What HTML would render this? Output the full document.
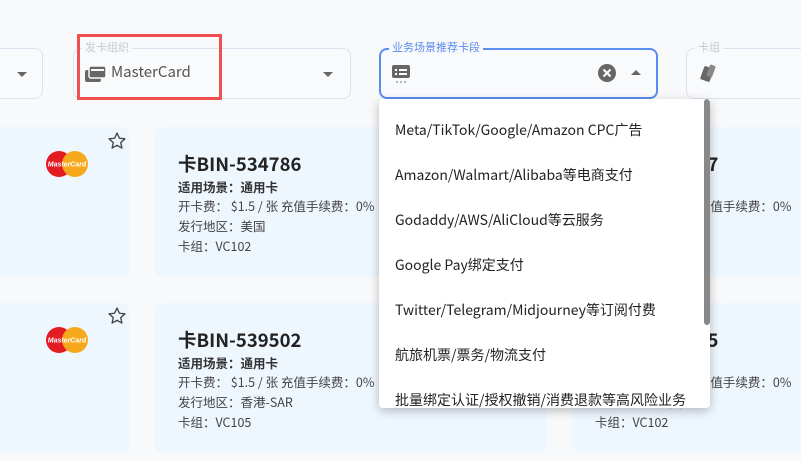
<!DOCTYPE html>
<html><head><meta charset="utf-8"><style>
*{box-sizing:border-box;margin:0;padding:0}
body{width:801px;height:461px;overflow:hidden;background:#f8f9fb;font-family:"Noto Sans CJK SC","Liberation Sans",sans-serif;position:relative;color:#333}
.f{position:absolute;top:48px;height:51px;border:1px solid #dde3ee;border-radius:8px;background:#f9fafc}
.lbl{position:absolute;top:-9px;left:8px;font-size:11px;color:#c5cad3;background:#f8f9fb;padding:0 3px;line-height:14px}
.caret{position:absolute;top:23px;width:0;height:0;border-left:5px solid transparent;border-right:5px solid transparent;border-top:5px solid #666}
.card{position:absolute;background:#eef6fe;border-radius:8px;height:150px}
.t{position:absolute;left:23px;top:24px;font-size:18.5px;font-weight:bold;color:#222;line-height:26px}
.l{position:absolute;left:23px;font-size:12.5px;color:#444;line-height:17px;white-space:nowrap}
.dd{position:absolute;left:379px;top:99px;width:331px;height:309px;background:#fff;border-radius:4px;box-shadow:0 3px 10px rgba(0,0,0,.25);overflow:hidden}
.dd div.i{position:absolute;left:16px;font-size:14px;color:#222;white-space:nowrap;line-height:20px}
.mc{position:absolute;width:44px;height:28px}
</style></head><body>
<div class="f" style="left:-20px;width:63px"><div class="caret" style="left:36px"></div></div>
<div class="f" style="left:73px;width:278px"><div class="lbl">发卡组织</div>
<svg style="position:absolute;left:11px;top:16px" width="22" height="18" viewBox="0 0 22 18"><rect x="0" y="5" width="16" height="12" rx="2" fill="#666"/><rect x="4" y="1" width="17" height="12" rx="2" fill="#666" stroke="#f9fafc" stroke-width="1.5"/><rect x="6" y="4" width="13" height="2" fill="#f9fafc"/></svg>
<div style="position:absolute;left:37px;top:12px;font-size:15px;color:#555;line-height:22px">MasterCard</div>
<div class="caret" style="left:249px"></div></div>
<div style="position:absolute;left:77px;top:34px;width:145px;height:66px;border:3px solid #f05050"></div>
<div class="f" style="left:379px;width:279px;border:2px solid #5b8df0"><div class="lbl" style="color:#5b8df0;top:-10px">业务场景推荐卡段</div>
<svg style="position:absolute;left:11px;top:15px" width="18" height="20"><rect x="0" y="0" width="18" height="13" rx="2" fill="#666"/><rect x="3" y="4" width="2" height="2" fill="#fff"/><rect x="7" y="4" width="8" height="2" fill="#fff"/><rect x="3" y="8" width="2" height="2" fill="#fff"/><rect x="7" y="8" width="8" height="2" fill="#fff"/><circle cx="5" cy="17" r=".8" fill="#666"/><circle cx="9" cy="17" r=".8" fill="#666"/><circle cx="13" cy="17" r=".8" fill="#666"/></svg>
<svg style="position:absolute;left:216px;top:13px" width="20" height="20"><circle cx="10" cy="10" r="9" fill="#666"/><path d="M6.5 6.5l7 7M13.5 6.5l-7 7" stroke="#fff" stroke-width="2"/></svg>
<div style="position:absolute;left:250px;top:20px;border-left:5px solid transparent;border-right:5px solid transparent;border-bottom:5px solid #666"></div></div>
<div class="f" style="left:686px;width:130px"><div class="lbl">卡组</div>
<svg style="position:absolute;left:12px;top:14px" width="20" height="20"><rect x="3" y="4" width="10" height="14" rx="1.5" fill="#666" transform="rotate(20 8 11)"/><rect x="9" y="2" width="6" height="12" rx="1" fill="#888" transform="rotate(20 12 8)"/></svg></div>

<div class="card" style="left:-10px;top:127px;width:139px"></div>
<div class="card" style="left:-10px;top:303px;width:139px"></div>
<svg class="mc" style="left:45px;top:150px" viewBox="0 0 44 28"><circle cx="14" cy="14" r="13" fill="#e31b23"/><circle cx="30" cy="14" r="13" fill="#f8a81c"/><text x="22" y="16.5" font-size="7" font-style="italic" font-weight="bold" fill="#fff" text-anchor="middle" font-family="Liberation Sans">MasterCard</text></svg>
<svg class="mc" style="left:45px;top:326px" viewBox="0 0 44 28"><circle cx="14" cy="14" r="13" fill="#e31b23"/><circle cx="30" cy="14" r="13" fill="#f8a81c"/><text x="22" y="16.5" font-size="7" font-style="italic" font-weight="bold" fill="#fff" text-anchor="middle" font-family="Liberation Sans">MasterCard</text></svg>
<svg style="position:absolute;left:107px;top:131px" width="20" height="20" viewBox="0 0 24 24"><path d="M12 2.5l2.9 6.2 6.6.7-5 4.5 1.4 6.6L12 17.2l-5.9 3.3 1.4-6.6-5-4.5 6.6-.7z" fill="none" stroke="#444" stroke-width="1.6" stroke-linejoin="round"/></svg>
<svg style="position:absolute;left:107px;top:306px" width="20" height="20" viewBox="0 0 24 24"><path d="M12 2.5l2.9 6.2 6.6.7-5 4.5 1.4 6.6L12 17.2l-5.9 3.3 1.4-6.6-5-4.5 6.6-.7z" fill="none" stroke="#444" stroke-width="1.6" stroke-linejoin="round"/></svg>

<div class="card" style="left:155px;top:127px;width:392px"><div class="t">卡BIN-534786</div><div class="l" style="top:51px;font-weight:bold;color:#333">适用场景：通用卡</div><div class="l" style="top:70px">开卡费： $1.5 / 张 充值手续费：0%</div><div class="l" style="top:90px">发行地区：美国</div><div class="l" style="top:110px">卡组：VC102</div></div>
<div class="card" style="left:155px;top:303px;width:392px"><div class="t">卡BIN-539502</div><div class="l" style="top:51px;font-weight:bold;color:#333">适用场景：通用卡</div><div class="l" style="top:70px">开卡费： $1.5 / 张 充值手续费：0%</div><div class="l" style="top:90px">发行地区：香港-SAR</div><div class="l" style="top:110px">卡组：VC105</div></div>
<div class="card" style="left:572px;top:127px;width:260px"><div class="t">卡BIN-534787</div><div class="l" style="top:51px;font-weight:bold">适用场景：通用卡</div><div class="l" style="top:70px">开卡费： $1.5 / 张 充值手续费：0%</div><div class="l" style="top:90px">发行地区：美国</div><div class="l" style="top:110px">卡组：VC102</div></div>
<div class="card" style="left:572px;top:303px;width:260px"><div class="t">卡BIN-539505</div><div class="l" style="top:51px;font-weight:bold">适用场景：通用卡</div><div class="l" style="top:70px">开卡费： $1.5 / 张 充值手续费：0%</div><div class="l" style="top:90px">发行地区：美国</div><div class="l" style="top:110px">卡组：VC102</div></div>

<div class="dd">
<div class="i" style="top:21px">Meta/TikTok/Google/Amazon CPC广告</div>
<div class="i" style="top:66px">Amazon/Walmart/Alibaba等电商支付</div>
<div class="i" style="top:111px">Godaddy/AWS/AliCloud等云服务</div>
<div class="i" style="top:156px">Google Pay绑定支付</div>
<div class="i" style="top:201px">Twitter/Telegram/Midjourney等订阅付费</div>
<div class="i" style="top:246px">航旅机票/票务/物流支付</div>
<div class="i" style="top:291px">批量绑定认证/授权撤销/消费退款等高风险业务</div>
<div style="position:absolute;right:0;top:0;width:6px;height:226px;background:#888;border-radius:3px"></div>
</div>
</body></html>
